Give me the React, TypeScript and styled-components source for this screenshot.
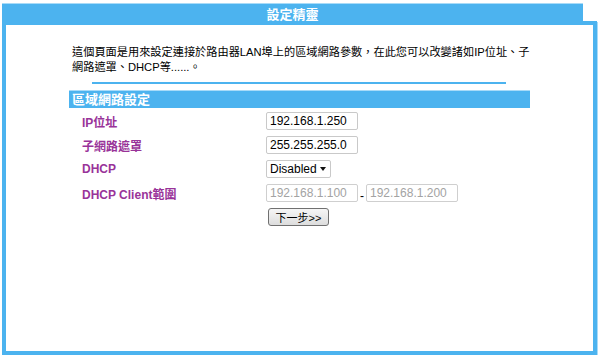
import React from 'react';
import styled, { createGlobalStyle } from 'styled-components';

const BLUE = '#4cb3ef';
const LIGHT_BLUE = '#a8dbf8';
const PURPLE = '#993399';

const GlobalStyle = createGlobalStyle`
	html, body {
		margin: 0;
		padding: 0;
		background: #ffffff;
	}
	body {
		font-family: "Liberation Sans", "Noto Sans CJK TC", Arial, sans-serif;
		font-size: 12px;
		color: #000;
	}
`;

const Frame = styled.div`
	width: 595px;
	padding: 3px 0 0 2px;
`;

const TitleBar = styled.div`
	width: 581px;
	height: 18px;
	line-height: 22px;
	background: ${BLUE};
	border-top: 1px solid ${LIGHT_BLUE};
	box-sizing: border-box;
	color: #ffffff;
	font-size: 13px;
	font-weight: bold;
	text-align: center;
`;

const Box = styled.div`
	box-sizing: border-box;
	width: 595px;
	height: 334px;
	border: 4px solid ${BLUE};
	box-shadow: 1px 1px 0 ${LIGHT_BLUE};
	background: #ffffff;
	padding: 20px 0 0 66px;
`;

const Description = styled.p`
	margin: 0;
	width: 458px;
	font-size: 11.2px;
	line-height: 15px;
`;

const Divider = styled.div`
	width: 414px;
	height: 2px;
	margin: 7px 0 0 20px;
	background: ${BLUE};
`;

const SectionBar = styled.div`
	width: 461px;
	height: 18px;
	margin: 6px 0 0 -3px;
	box-sizing: border-box;
	padding-left: 3px;
	background: ${BLUE};
	border-top: 1px solid ${LIGHT_BLUE};
	color: #ffffff;
	font-size: 13px;
	font-weight: bold;
	line-height: 17px;
`;

const Form = styled.div`
	margin-left: -3px;
	padding-top: 1px;
`;

const Row = styled.div`
	display: grid;
	grid-template-columns: 197px auto;
	align-items: center;
	height: 24px;
`;

const Label = styled.div`
	padding-left: 13px;
	color: ${PURPLE};
	font-weight: bold;
	font-size: 12px;
`;

const Field = styled.div`
	display: flex;
	align-items: center;
`;

const TextInput = styled.input`
	box-sizing: border-box;
	width: 92px;
	height: 18px;
	margin: 0;
	padding: 0 3px;
	border: 1px solid #c9c9c9;
	border-radius: 2px;
	font-family: "Liberation Sans", Arial, sans-serif;
	font-size: 12px;
	color: #000;
	background: #fff;
	outline: none;

	&:disabled {
		color: #a3a3a3;
		border-color: #cfcfcf;
		background: #fff;
	}
`;

const Dash = styled.span`
	width: 8px;
	text-align: center;
	font-size: 12px;
	line-height: 12px;
	padding-top: 6px;
	color: #000;
`;

const SelectWrap = styled.div`
	position: relative;
	width: 65px;
	height: 18px;
`;

const Select = styled.select`
	appearance: none;
	box-sizing: border-box;
	width: 65px;
	height: 18px;
	margin: 0;
	padding: 0 0 0 3px;
	border: 1px solid #c9c9c9;
	border-radius: 2px;
	background: #fff;
	font-family: "Liberation Sans", Arial, sans-serif;
	font-size: 12px;
	color: #000;
	outline: none;
`;

const Caret = styled.span`
	position: absolute;
	right: 5px;
	top: 7px;
	width: 0;
	height: 0;
	border-left: 3.5px solid transparent;
	border-right: 3.5px solid transparent;
	border-top: 4px solid #111;
	pointer-events: none;
`;

const NextButton = styled.button`
	box-sizing: border-box;
	width: 61px;
	height: 18px;
	margin: 0 0 0 2px;
	padding: 0;
	border: 1px solid #707070;
	border-radius: 3px;
	background: linear-gradient(#f6f6f6, #dddddd);
	font-family: "Liberation Sans", "Noto Sans CJK TC", Arial, sans-serif;
	font-size: 11px;
	color: #000;
	cursor: pointer;
`;

const App = () => {
	return (
		<>
			<GlobalStyle />
			<Frame>
				<TitleBar>設定精靈</TitleBar>
				<Box>
					<Description>
						這個頁面是用來設定連接於路由器LAN埠上的區域網路參數，在此您可以改變諸如IP位址、子網路遮罩、DHCP等......。
					</Description>
					<Divider />
					<SectionBar>區域網路設定</SectionBar>
					<Form>
						<Row>
							<Label>IP位址</Label>
							<Field>
								<TextInput defaultValue="192.168.1.250" />
							</Field>
						</Row>
						<Row>
							<Label>子網路遮罩</Label>
							<Field>
								<TextInput defaultValue="255.255.255.0" />
							</Field>
						</Row>
						<Row>
							<Label>DHCP</Label>
							<Field>
								<SelectWrap>
									<Select defaultValue="disabled">
										<option value="disabled">Disabled</option>
										<option value="enabled">Enabled</option>
									</Select>
									<Caret />
								</SelectWrap>
							</Field>
						</Row>
						<Row>
							<Label>DHCP Client範圍</Label>
							<Field>
								<TextInput defaultValue="192.168.1.100" disabled />
								<Dash>-</Dash>
								<TextInput defaultValue="192.168.1.200" disabled />
							</Field>
						</Row>
						<Row>
							<div />
							<Field>
								<NextButton>下一步&gt;&gt;</NextButton>
							</Field>
						</Row>
					</Form>
				</Box>
			</Frame>
		</>
	);
};

export default App;
